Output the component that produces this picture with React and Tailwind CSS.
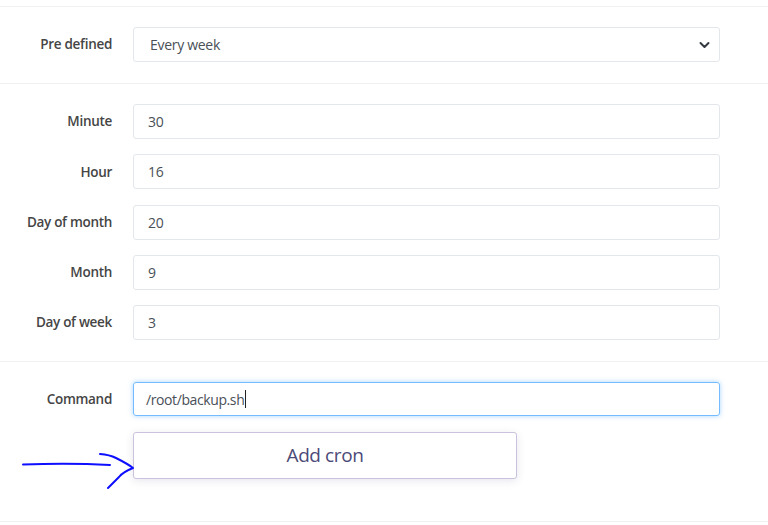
import React from "react";

const fields = [
    { label: "Minute", value: "30" },
    { label: "Hour", value: "16" },
    { label: "Day of month", value: "20" },
    { label: "Month", value: "9" },
    { label: "Day of week", value: "3" },
];

function Row({ label, children, className = "" }) {
    return (
        <div className={"grid grid-cols-[112px_587px] items-center gap-x-[21px] " + className}>
            <span className="text-right text-[13.5px] font-semibold tracking-[-0.3px] text-[#454545]">{label}</span>
            {children}
        </div>
    );
}

export default function App() {
    return (
        <div className="h-[525px] w-[768px] overflow-hidden bg-white font-['Open_Sans',sans-serif]">
            <div className="h-[6px]" />
            <section className="border-t border-[#eef0f2] pt-5 pb-[21px]">
                <Row label="Pre defined">
                    <div className="flex h-[35px] items-center justify-between rounded-[3px] border border-[#e3e7ec] pr-[9px] pl-4 text-[14px] tracking-[-0.3px] text-[#495057]">
                        <span>Every week</span>
                        <svg width="11" height="8" viewBox="0 0 11 8" fill="none">
                            <path d="M1.5 2l4 4 4-4" stroke="#343a40" strokeWidth="2" strokeLinecap="round" strokeLinejoin="round" />
                        </svg>
                    </div>
                </Row>
            </section>
            <section className="flex flex-col gap-[15.25px] border-t border-[#eef0f2] pt-5 pb-[21px]">
                {fields.map((f) => (
                    <Row key={f.label} label={f.label}>
                        <input
                            readOnly
                            value={f.value}
                            className="h-[35px] rounded-[3px] border border-[#e3e7ec] px-[14px] text-[14px] tracking-[-0.3px] text-[#495057] outline-none"
                        />
                    </Row>
                ))}
            </section>
            <section className="flex flex-col gap-4 border-t border-b border-[#eef0f2] pt-5 pb-[42px]">
                <Row label="Command">
                    <div className="flex h-[34px] items-center rounded-[3px] border border-[#74bcff] px-[12px] text-[14px] tracking-[-0.4px] text-[#495057] shadow-[0_0_5px_rgba(0,136,255,0.35)]">
                        <span>/root/backup.sh</span>
                        <span className="ml-[1px] h-[18px] w-px bg-[#222]" />
                    </div>
                </Row>
                <Row label="" className="relative">
                    <button className="h-[47px] w-[384px] rounded-[3px] border border-[#cbc3dd] bg-white text-[19px] tracking-[-0.4px] text-[#4c4a78] shadow-[0_2px_8px_rgba(60,50,110,0.12)]">
                        Add cron
                    </button>
                    <svg className="absolute top-[21px] left-[22px]" width="116" height="38" viewBox="0 0 116 38" fill="none">
                        <path d="M1 11.5C30 10.5 60 10.5 88 12" stroke="#0f0fff" strokeWidth="2" strokeLinecap="round" />
                        <path d="M78 1C84 1.5 90 3 94 5C100 8 106 11 111 15C106 17 100 20 97 24C93 28 89 32 86 35" stroke="#0f0fff" strokeWidth="2" strokeLinecap="round" strokeLinejoin="round" />
                    </svg>
                </Row>
            </section>
        </div>
    );
}
